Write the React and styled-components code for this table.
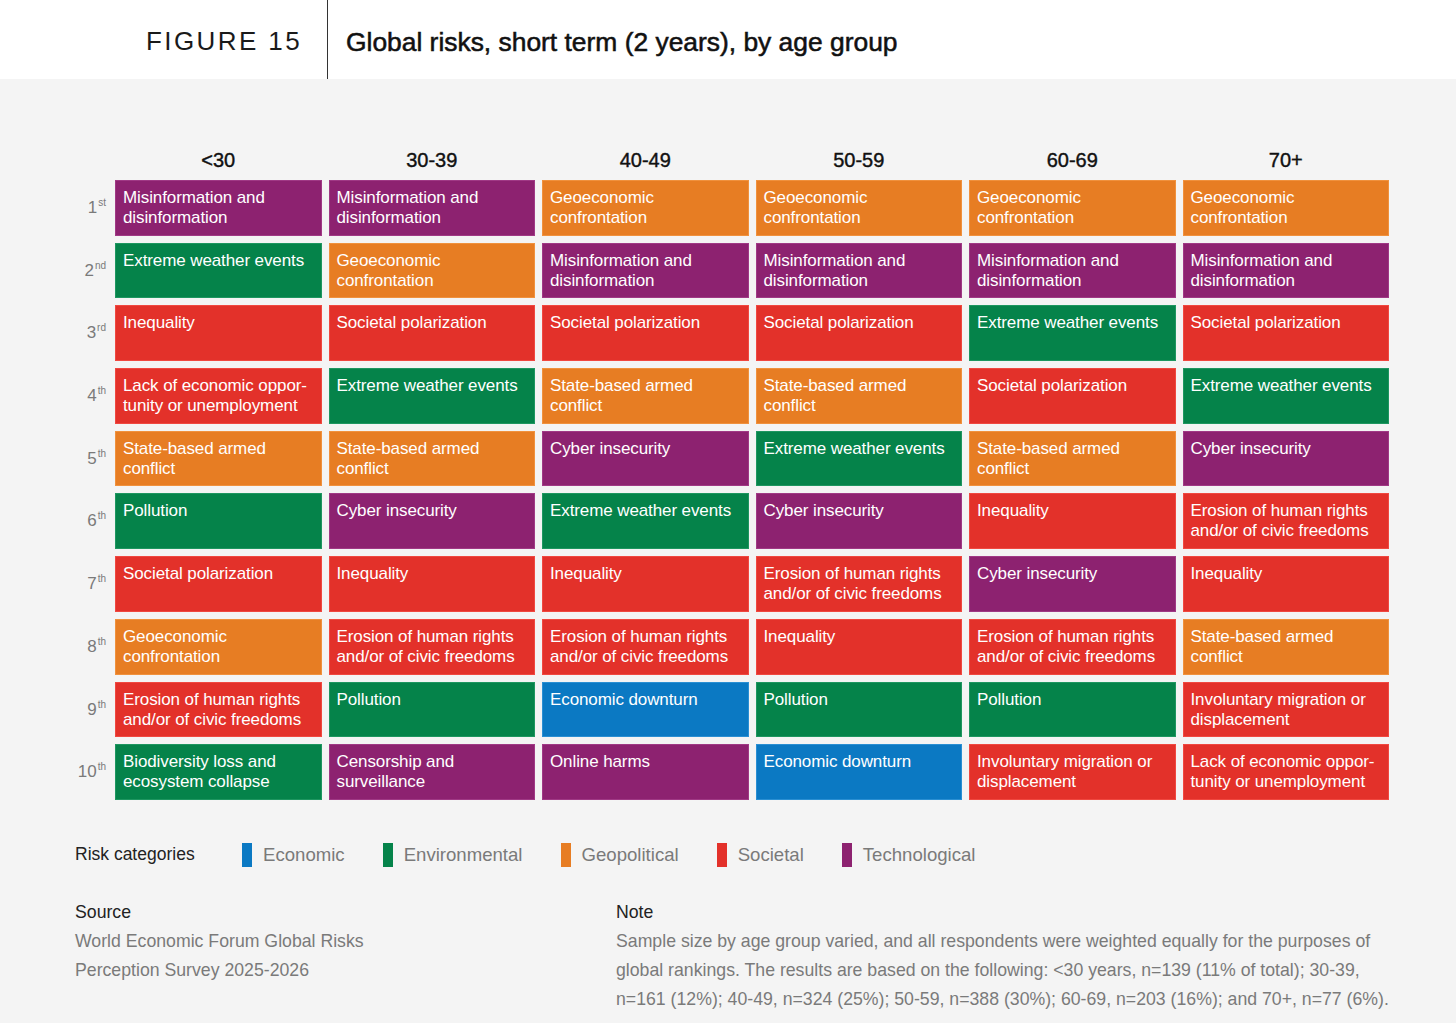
import React from "react";
import styled, { createGlobalStyle } from "styled-components";

const GlobalStyle = createGlobalStyle`
  html, body { margin: 0; padding: 0; background: #f4f4f4; }
  body { font-family: "Liberation Sans", Arial, sans-serif; }
  * { box-sizing: border-box; }
`;

const COLORS = {
  E: { bg: "#0b79c3", edge: "#2a8fd3" },
  N: { bg: "#05834a", edge: "#1e9660" },
  G: { bg: "#e77d23", edge: "#f0913d" },
  S: { bg: "#e3312a", edge: "#f04840" },
  T: { bg: "#8d2270", edge: "#a03985" },
};

const MIS = ["Misinformation and\ndisinformation", "T"];
const GEO = ["Geoeconomic\nconfrontation", "G"];
const EXT = ["Extreme weather events", "N"];
const INE = ["Inequality", "S"];
const SOC = ["Societal polarization", "S"];
const LACK = ["Lack of economic oppor-\ntunity or unemployment", "S"];
const STATE = ["State-based armed\nconflict", "G"];
const POL = ["Pollution", "N"];
const CYB = ["Cyber insecurity", "T"];
const ERO = ["Erosion of human rights\nand/or of civic freedoms", "S"];
const BIO = ["Biodiversity loss and\necosystem collapse", "N"];
const CEN = ["Censorship and\nsurveillance", "T"];
const ECO = ["Economic downturn", "E"];
const ONL = ["Online harms", "T"];
const INV = ["Involuntary migration or\ndisplacement", "S"];

const columns = [
  { label: "<30", items: [MIS, EXT, INE, LACK, STATE, POL, SOC, GEO, ERO, BIO] },
  { label: "30-39", items: [MIS, GEO, SOC, EXT, STATE, CYB, INE, ERO, POL, CEN] },
  { label: "40-49", items: [GEO, MIS, SOC, STATE, CYB, EXT, INE, ERO, ECO, ONL] },
  { label: "50-59", items: [GEO, MIS, SOC, STATE, EXT, CYB, ERO, INE, POL, ECO] },
  { label: "60-69", items: [GEO, MIS, EXT, SOC, STATE, INE, CYB, ERO, POL, INV] },
  { label: "70+", items: [GEO, MIS, SOC, EXT, CYB, ERO, INE, STATE, INV, LACK] },
];

const ranks = [
  ["1", "st"], ["2", "nd"], ["3", "rd"], ["4", "th"], ["5", "th"],
  ["6", "th"], ["7", "th"], ["8", "th"], ["9", "th"], ["10", "th"],
];

const legend = [
  ["Economic", "E"],
  ["Environmental", "N"],
  ["Geopolitical", "G"],
  ["Societal", "S"],
  ["Technological", "T"],
];

const Page = styled.div`
  width: 1456px;
  min-height: 1023px;
  background: #f4f4f4;
`;

const Header = styled.header`
  display: flex;
  height: 79px;
  background: #ffffff;
`;

const FigureLabel = styled.div`
  width: 328px;
  border-right: 1px solid #333;
  display: flex;
  align-items: center;
  justify-content: flex-end;
  padding-right: 25px;
  padding-top: 4px;
  font-size: 26px;
  letter-spacing: 2.4px;
  color: #1a1a1a;
`;

const Title = styled.h1`
  margin: 0;
  display: flex;
  align-items: center;
  padding-left: 18px;
  padding-top: 6px;
  font-size: 26.4px;
  font-weight: 400;
  -webkit-text-stroke: 0.55px #111;
  color: #111;
`;

const Body = styled.main`
  padding: 70px 67px 0 75px;
`;

const Chart = styled.div`
  display: grid;
  grid-template-columns: 33px repeat(6, 1fr);
  grid-template-rows: 24px repeat(10, 55.7px);
  column-gap: 7px;
  row-gap: 7px;
`;

const ColHead = styled.div`
  text-align: center;
  font-size: 20px;
  line-height: 24px;
  color: #111;
  -webkit-text-stroke: 0.4px #111;
  margin-top: -1px;
`;

const Rank = styled.div`
  text-align: right;
  padding-right: 2px;
  padding-top: 18px;
  font-size: 17px;
  line-height: 20px;
  color: #7a7a7a;
  white-space: nowrap;
  sup {
    font-size: 10px;
    vertical-align: 7px;
    line-height: 0;
    margin-left: 1px;
  }
`;

const Cell = styled.div`
  background: ${(p) => COLORS[p.$cat].bg};
  box-shadow: inset 0 0 0 1px ${(p) => COLORS[p.$cat].edge};
  color: #fff;
  font-size: 17px;
  line-height: 20px;
  padding: 8px 8px 0 8px;
  white-space: pre-line;
  letter-spacing: -0.1px;
`;

const Legend = styled.div`
  display: flex;
  align-items: center;
  margin-top: 43px;
  height: 24px;
`;

const LegendTitle = styled.div`
  font-size: 17.5px;
  color: #222;
  width: 167px;
`;

const LegendItem = styled.div`
  display: flex;
  align-items: center;
  gap: 11px;
  margin-right: 38px;
  font-size: 18.6px;
  color: #7a7a7a;
`;

const Swatch = styled.span`
  display: block;
  width: 10px;
  height: 24px;
  background: ${(p) => COLORS[p.$cat].bg};
`;

const Footer = styled.div`
  display: grid;
  grid-template-columns: 541px 1fr;
  margin-top: 31px;
`;

const Block = styled.div`
  font-size: 17.7px;
  line-height: 29px;
`;

const BlockTitle = styled.div`
  color: #222;
`;

const BlockText = styled.div`
  color: #7a7a7a;
  white-space: pre-line;
`;

export default function App() {
  return (
    <Page>
      <GlobalStyle />
      <Header>
        <FigureLabel>FIGURE 15</FigureLabel>
        <Title>Global risks, short term (2 years), by age group</Title>
      </Header>
      <Body>
        <Chart>
          <div />
          {columns.map((c) => (
            <ColHead key={c.label}>{c.label}</ColHead>
          ))}
          {ranks.map((r, i) => (
            <React.Fragment key={r[0]}>
              <Rank>
                {r[0]}
                <sup>{r[1]}</sup>
              </Rank>
              {columns.map((c) => (
                <Cell key={c.label} $cat={c.items[i][1]}>
                  {c.items[i][0]}
                </Cell>
              ))}
            </React.Fragment>
          ))}
        </Chart>
        <Legend>
          <LegendTitle>Risk categories</LegendTitle>
          {legend.map(([name, cat]) => (
            <LegendItem key={name}>
              <Swatch $cat={cat} />
              {name}
            </LegendItem>
          ))}
        </Legend>
        <Footer>
          <Block>
            <BlockTitle>Source</BlockTitle>
            <BlockText>{"World Economic Forum Global Risks\nPerception Survey 2025-2026"}</BlockText>
          </Block>
          <Block>
            <BlockTitle>Note</BlockTitle>
            <BlockText>
              {"Sample size by age group varied, and all respondents were weighted equally for the purposes of\nglobal rankings. The results are based on the following: <30 years, n=139 (11% of total); 30-39,\nn=161 (12%); 40-49, n=324 (25%); 50-59, n=388 (30%); 60-69, n=203 (16%); and 70+, n=77 (6%)."}
            </BlockText>
          </Block>
        </Footer>
      </Body>
    </Page>
  );
}
